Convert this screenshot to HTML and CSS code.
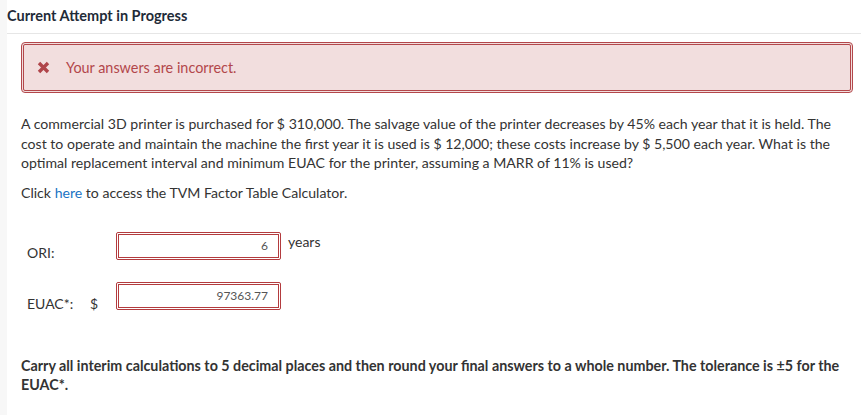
FILE: index.html
```html
<!DOCTYPE html>
<html>
<head>
<meta charset="utf-8">
<link rel="stylesheet" href="styles.css">
</head>
<body>
<div class="page">
  <div class="strip"></div>
  <div class="main">
    <div class="header">Current Attempt in Progress</div>
    <div class="section">
      <div class="alert">
        <svg class="alert-icon" width="13" height="13" viewBox="0 0 13 13"><path d="M2 2 L11 11 M11 2 L2 11" stroke="#b0454a" stroke-width="3.4" stroke-linecap="butt"/></svg>
        <span>Your answers are incorrect.</span>
      </div>
      <p class="question">A commercial 3D printer is purchased for $ 310,000. The salvage value of the printer decreases by 45% each year that it is held. The cost to operate and maintain the machine the first year it is used is $ 12,000; these costs increase by $ 5,500 each year. What is the optimal replacement interval and minimum EUAC for the printer, assuming a MARR of 11% is used?</p>
      <p class="click">Click <a href="#" class="link">here</a> to access the TVM Factor Table Calculator.</p>

      <div class="answers">
        <div class="row row-ori">
          <div class="label">ORI:</div>
          <div class="prefix"></div>
          <div class="field">6</div>
          <div class="unit">years</div>
        </div>
        <div class="row row-euac">
          <div class="label">EUAC*:</div>
          <div class="prefix">$</div>
          <div class="field">97363.77</div>
          <div class="unit"></div>
        </div>
      </div>

      <p class="note">Carry all interim calculations to 5 decimal places and then round your final answers to a whole number. The tolerance is ±5 for the EUAC*.</p>
    </div>
  </div>
</div>
</body>
</html>
```

FILE: styles.css
```css
html, body {
  margin: 0;
  padding: 0;
  background: #ffffff;
}
body {
  font-family: Lato, "Liberation Sans", sans-serif;
  color: #333333;
  width: 861px;
  height: 415px;
  overflow: hidden;
}
.page {
  display: flex;
  height: 415px;
}
.strip {
  width: 7px;
  flex: none;
  background: #f7f7f7;
}
.main {
  flex: 1;
}
.header {
  font-size: 14.5px;
  font-weight: 700;
  color: #1f2b38;
  line-height: 16px;
  padding: 8px 0 9px 0;
  border-bottom: 1px solid #e6e6e6;
}
.section {
  padding: 0 8px 0 14px;
}
.alert {
  margin-top: 8px;
  height: 45px;
  border: 3px double #b3474b;
  border-radius: 4px;
  background: #f2dede;
  color: #b2474b;
  display: flex;
  align-items: center;
  padding-left: 13px;
  font-size: 14.4px;
}
.alert-icon {
  margin-right: 16px;
}
.question {
  margin: 21px 0 0 0;
  font-size: 14.1px;
  line-height: 19.5px;
  padding-right: 14px;
}
.click {
  margin: 10px 0 0 0;
  font-size: 14.1px;
  line-height: 19.5px;
}
.link {
  color: #1a73c4;
  text-decoration: none;
}
.answers {
  margin-top: 30px;
  padding-left: 6px;
  display: flex;
  flex-direction: column;
  gap: 19px;
}
.row {
  display: flex;
  align-items: flex-start;
  font-size: 14px;
}
.label {
  width: 63px;
  line-height: 20px;
}
.row-ori .label {
  margin-top: 11px;
}
.row-euac .label {
  margin-top: 12px;
}
.prefix {
  width: 26px;
  line-height: 20px;
  margin-top: 12px;
}
.field {
  width: 165px;
  height: 28px;
  box-sizing: border-box;
  border: 3px double #b33b3e;
  border-radius: 2px;
  text-align: right;
  padding-right: 10px;
  font-size: 12px;
  line-height: 22px;
  color: #555555;
}
.unit {
  margin-left: 7px;
  line-height: 20px;
}
.note {
  margin: 42px 0 0 0;
  font-size: 14.3px;
  font-weight: 700;
  line-height: 19px;
  padding-right: 10px;
}
```
